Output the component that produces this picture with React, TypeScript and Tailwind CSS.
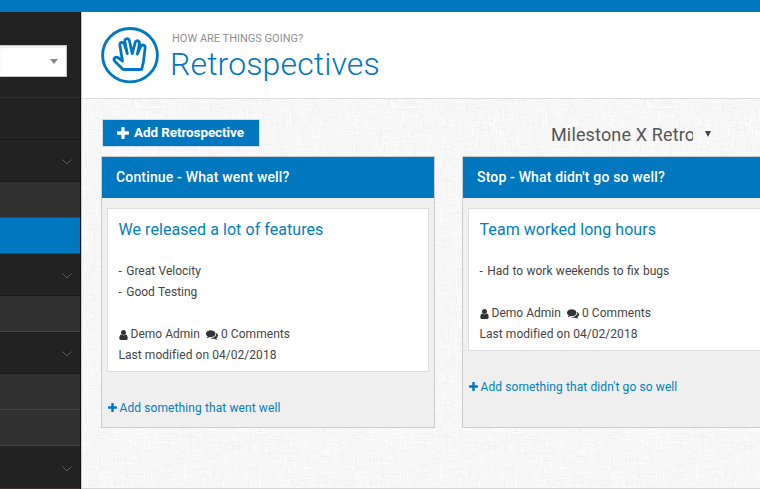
import React from "react";

const ROBOTO = "font-['Roboto','Liberation_Sans',sans-serif]";

type IconProps = { className?: string };

function Plus({ className }: IconProps) {
  return (
    <svg viewBox="192 128 1408 1408" fill="currentColor" className={className}>
      <path d="M1600 736v192q0 40-28 68t-68 28h-416v416q0 40-28 68t-68 28h-192q-40 0-68-28t-28-68v-416h-416q-40 0-68-28t-28-68v-192q0-40 28-68t68-28h416v-416q0-40 28-68t68-28h192q40 0 68 28t28 68v416h416q40 0 68 28t28 68z" />
    </svg>
  );
}

function User({ className }: IconProps) {
  return (
    <svg viewBox="0 128 1280 1536" fill="currentColor" className={className}>
      <path d="M1280 1399q0 109-62.5 187t-150.5 78h-854q-88 0-150.5-78t-62.5-187q0-85 8.5-160.5t31.5-152 58.5-131 94-89 134.5-34.5q131 128 313 128t313-128q76 0 134.5 34.5t94 89 58.5 131 31.5 152 8.5 160.5zm-256-887q0 159-112.5 271.5t-271.5 112.5-271.5-112.5-112.5-271.5 112.5-271.5 271.5-112.5 271.5 112.5 112.5 271.5z" />
    </svg>
  );
}

function Comments({ className }: IconProps) {
  return (
    <svg viewBox="0 256 1792 1408" fill="currentColor" className={className}>
      <path d="M1408 768q0 139-94 257t-256.5 186.5-353.5 68.5q-86 0-176-16-124 88-278 128-36 9-86 16h-3q-11 0-20.5-8t-11.5-21q-1-3-1-6.5t.5-6.5 2-6l2.5-5 3.5-5.5 4-5 4.5-5 4-4.5q5-6 23-25t26-29.5 22.5-29 25-38.5 20.5-44q-124-72-195-177t-71-224q0-139 94-257t256.5-186.5 353.5-68.5 353.5 68.5 256.5 186.5 94 257zm384 256q0 120-71 224.5t-195 176.5q10 24 20.5 44t25 38.5 22.5 29 26 29.5 23 25q1 1 4 4.5t4.5 5 4 5 3.5 5.5l2.5 5 2 6 .5 6.5-1 6.5q-3 14-13 22t-22 7q-50-7-86-16-154-40-278-128-90 16-176 16-271 0-472-132 58 4 88 4 161 0 309-45t264-129q125-92 192-212t67-254q0-77-23-152 129 71 204 178t75 230z" />
    </svg>
  );
}

function Hand() {
  return (
    <svg viewBox="0 0 58 58" fill="none" stroke="#0077be" className="h-[58px] w-[58px] shrink-0">
      <ellipse cx="29" cy="28.2" rx="27.4" ry="26.7" strokeWidth="2.8" />
      <path
        d="M22.2 42.5 L13.7 34.2 C11.9 31.8 14.4 29.3 16.9 30.6 L21.5 34 L18.9 18.6 C18.4 15 22.4 14.2 23.4 17.2 L26.3 26.6 L23.9 15 C23.3 11.2 27.3 10.6 28.4 13.8 L31.2 26.6 L34.2 15.6 C35.1 12.5 39 13.6 38.4 16.9 L36.3 27.2 L39.6 19.6 C41 16.8 44.7 18 44.1 21.3 L42.4 35.2 L40.6 42.5 Z"
        strokeWidth="2.8"
        strokeLinejoin="round"
      />
    </svg>
  );
}

function Chevron() {
  return (
    <svg viewBox="0 0 10 6" fill="none" stroke="#606060" strokeWidth="1" className="mr-[8px] h-[6px] w-[10px]">
      <path d="M0.5 0.5 L5 5 L9.5 0.5" />
    </svg>
  );
}

// Short woven threads, laid out with a fixed seed.
const threads = (() => {
  let seed = 7;
  const next = () => {
    seed = (seed * 16807) % 2147483647;
    return seed / 2147483647;
  };
  const tones = ["#fdfdfd", "#f3f3f3", "#f6f6f6", "#f9f9f9", "#f1f1f1", "#fafafa"];
  return Array.from({ length: 4200 }, () => {
    const flat = next() > 0.5;
    const length = 2 + Math.floor(next() * 10);
    return {
      x: Math.floor(next() * 256),
      y: Math.floor(next() * 256),
      w: flat ? length : 1,
      h: flat ? 1 : length,
      fill: tones[Math.floor(next() * tones.length)],
    };
  });
})();

function Linen() {
  return (
    <svg className="absolute inset-0 h-full w-full" aria-hidden="true">
      <defs>
        <pattern id="linen" width="256" height="256" patternUnits="userSpaceOnUse">
          {threads.map((t, i) => (
            <rect key={i} x={t.x} y={t.y} width={t.w} height={t.h} fill={t.fill} />
          ))}
        </pattern>
      </defs>
      <rect width="100%" height="100%" fill="url(#linen)" />
    </svg>
  );
}

function Sidebar() {
  return (
    <aside className="flex w-[81px] shrink-0 flex-col border-r border-[#111111] bg-[#222222]">
      <div className="flex h-[86px] border-b border-[#303030] pt-[33px]">
        <div className="flex h-[32px] w-[67px] items-center justify-end border border-l-0 border-[#c8c8c8] bg-white pr-[8px] shadow-[inset_0_2px_2px_#eeeeee]">
          <div className="h-0 w-0 border-x-[4.5px] border-t-[5px] border-x-transparent border-t-[#888888]" />
        </div>
      </div>
      <div className="h-[42px] border-b border-[#191919]" />
      <div className="flex h-[42px] items-center justify-end border-b border-[#1a1a1a] pt-[3px]"><Chevron /></div>
      <div className="h-[36px] border-b border-[#454545] bg-[#303030]" />
      <div className="h-[35px] bg-[#0077be]" />
      <div className="flex h-[43px] items-center justify-end border-t border-b border-t-[#454545] border-b-[#1a1a1a] pt-[3px]"><Chevron /></div>
      <div className="h-[36px] border-b border-[#454545] bg-[#303030]" />
      <div className="flex h-[42px] items-center justify-end border-b border-[#1a1a1a] pt-[3px]"><Chevron /></div>
      <div className="h-[36px] border-b border-[#454545] bg-[#303030]" />
      <div className="h-[36px] border-b border-[#454545] bg-[#303030]" />
      <div className="flex flex-1 items-center justify-end border-b border-[#3a3030] pt-[3px]"><Chevron /></div>
    </aside>
  );
}

type ColumnProps = {
  heading: string;
  title: string;
  notes: string[];
  action: string;
};

function Column({ heading, title, notes, action }: ColumnProps) {
  return (
    <section className="h-[272px] w-[334px] shrink-0 border border-[#cccccc] bg-[#efefef]">
      <h2 className="flex h-[41px] items-center bg-[#0077be] pl-[14px] text-[14px] font-medium tracking-[0.16px] text-white">
        {heading}
      </h2>
      <div className="mx-[5px] mt-[10px] border border-[#dddddd] bg-white pr-[10px] pb-[5px] pl-[10.5px] text-[12px] leading-[21px] text-[#444444]">
        <h3 className="pt-[10px] pb-[21px] text-[16px] leading-[21px] tracking-[0.06px] text-[#0080c0]">{title}</h3>
        {notes.map((note) => (
          <p key={note} className="[word-spacing:0.4px]">
            <span className="mr-[1px]">-</span> {note}
          </p>
        ))}
        <div className="mt-[21px] flex items-center">
          <User className="mr-[3px] h-[10px] w-[9px] text-[#333333]" />
          <span className="tracking-[0.02px]">Demo Admin</span>
          <Comments className="mr-[3px] ml-[6px] h-[10px] w-[12px] text-[#333333]" />
          <span className="tracking-[0.06px]">0 Comments</span>
        </div>
        <p className="tracking-[0.05px]">Last modified on 04/02/2018</p>
      </div>
      <a className="mt-[26px] ml-[5.5px] flex items-center text-[12px] leading-[21px] text-[#0080c0]">
        <Plus className="mr-[3px] mb-[2px] h-[9px] w-[9px] text-[#0077be]" />
        <span className="tracking-[0.1px]">{action}</span>
      </a>
    </section>
  );
}

export default function App() {
  return (
    <div className={`flex h-[489px] w-[760px] flex-col overflow-hidden bg-white ${ROBOTO}`}>
      <div className="h-[12px] shrink-0 bg-[#0077be]" />
      <div className="flex min-h-0 flex-1">
        <Sidebar />
        <main className="flex min-w-0 flex-1 flex-col border-l border-[#cccccc]">
          <header className="flex h-[87px] shrink-0 border-b border-[#dddddd] bg-white pt-[15px] pl-[19px]">
            <Hand />
            <div className="ml-[11px] pt-[4px]">
              <p className="pl-[2px] text-[11px] leading-[16px] text-[#8f8f8f]">HOW ARE THINGS GOING?</p>
              <h1 className="text-[32px] leading-[35px] font-light tracking-[0.13px] text-[#0077be]">Retrospectives</h1>
            </div>
          </header>
          <div className="relative flex-1 overflow-hidden border-b border-[#d5d5d5] bg-[#f7f7f7]">
            <Linen />
            <div className="relative pt-[20px] pl-[19px]">
              <div className="flex h-[37px] items-start pl-px">
                <button className="flex h-[28px] w-[158px] items-center border border-[#d3dde3] bg-[#0077be] pb-px pl-[14px] text-[13.5px] font-bold text-white">
                  <Plus className="mr-[5px] h-[12px] w-[12px]" />
                  <span className="tracking-[-0.1px]">Add Retrospective</span>
                </button>
                <div className="ml-[291px] flex h-[30px] items-center">
                  <div className="w-[142px] overflow-hidden text-[18px] tracking-[0.15px] whitespace-nowrap text-[#555555]">Milestone X Retro</div>
                  <div className="ml-[12px] h-0 w-0 border-x-[3.5px] border-t-[6px] border-x-transparent border-t-[#444444]" />
                </div>
              </div>
              <div className="flex gap-[27px]">
                <Column
                  heading="Continue - What went well?"
                  title="We released a lot of features"
                  notes={["Great Velocity", "Good Testing"]}
                  action="Add something that went well"
                />
                <Column
                  heading="Stop - What didn't go so well?"
                  title="Team worked long hours"
                  notes={["Had to work weekends to fix bugs"]}
                  action="Add something that didn't go so well"
                />
              </div>
            </div>
          </div>
        </main>
      </div>
    </div>
  );
}
